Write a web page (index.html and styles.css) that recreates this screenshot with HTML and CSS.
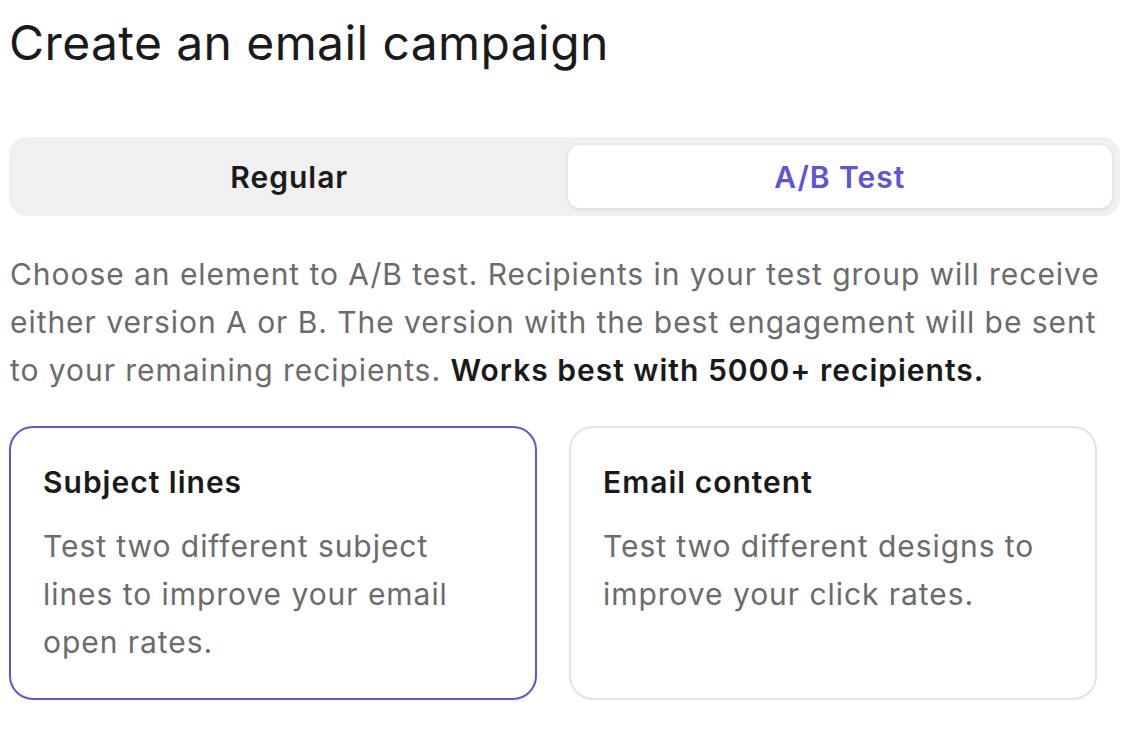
FILE: index.html
```html
<!DOCTYPE html>
<html lang="en">
<head>
  <meta charset="UTF-8">
  <meta name="viewport" content="width=device-width, initial-scale=1.0">
  <title>Create an email campaign</title>
  <link rel="stylesheet" href="styles.css">
</head>
<body>
  <div class="page">
    <h1>Create an email campaign</h1>

    <div class="tabs">
      <button class="tab">Regular</button>
      <button class="tab active">A/B Test</button>
    </div>

    <p class="intro">Choose an element to A/B test. Recipients in your test group will receive either version A or B. The version with the best engagement will be sent to your remaining recipients. <strong>Works best with 5000+ recipients.</strong></p>

    <div class="cards">
      <div class="card selected">
        <h2>Subject lines</h2>
        <p>Test two different subject lines to improve your email open rates.</p>
      </div>
      <div class="card">
        <h2>Email content</h2>
        <p>Test two different designs to improve your click rates.</p>
      </div>
    </div>
  </div>
</body>
</html>
```

FILE: styles.css
```css
body {
  font-family: Inter, "Noto Sans", sans-serif;
  margin: 0;
  padding: 0;
  background-color: #fff;
  color: #1a1a1a;
}
.page {
  padding: 14px 23px 0 9px;
}
h1 {
  font-size: 48px;
  line-height: 58px;
  font-weight: 400;
  margin: 0 0 65px 0;
  letter-spacing: 0.4px;
}
.tabs {
  display: flex;
  gap: 6px;
  padding: 8px;
  background-color: #f0f0f0;
  border-radius: 18px;
}
.tab {
  flex: 1;
  height: 63px;
  border: none;
  background: none;
  font-family: inherit;
  font-size: 30px;
  font-weight: 600;
  letter-spacing: 1px;
  color: #1a1a1a;
  border-radius: 12px;
  cursor: pointer;
}
.tab.active {
  background-color: #fff;
  color: #5d55d8;
  box-shadow: 0px 1px 4px rgba(0, 0, 0, 0.12);
}
.intro {
  margin: 34px 0 32px 1px;
  font-size: 30px;
  line-height: 48px;
  letter-spacing: 0.95px;
  color: #6b6b6b;
}
.intro strong {
  color: #1a1a1a;
  font-weight: 600;
  letter-spacing: 1px;
}
.cards {
  display: grid;
  grid-template-columns: 1fr 1fr;
  gap: 32px;
  width: 1088px;
}
.card {
  border: 2px solid #e3e3e3;
  border-radius: 24px;
  padding: 36px 32px 32px;
  cursor: pointer;
}
.card.selected {
  border-color: #5d55d8;
}
.card h2 {
  margin: 0 0 22px;
  font-size: 30px;
  line-height: 36px;
  font-weight: 600;
  letter-spacing: 1px;
}
.card p {
  margin: 0;
  font-size: 30px;
  line-height: 48px;
  letter-spacing: 0.95px;
  color: #6b6b6b;
}
```
